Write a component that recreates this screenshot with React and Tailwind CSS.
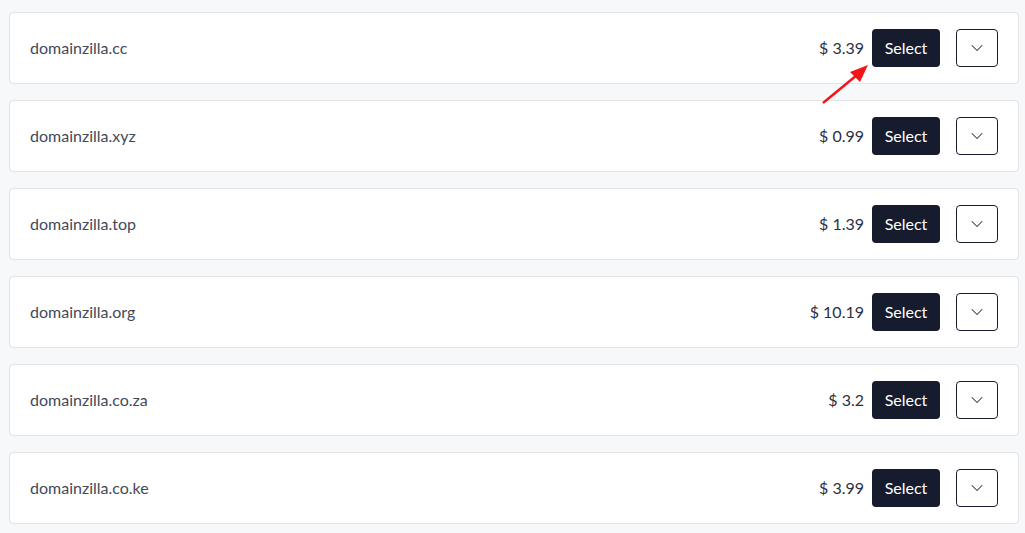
import { ChevronDown } from 'lucide-react'

const domains = [
  { name: 'domainzilla.cc', price: '3.39' },
  { name: 'domainzilla.xyz', price: '0.99' },
  { name: 'domainzilla.top', price: '1.39' },
  { name: 'domainzilla.org', price: '10.19' },
  { name: 'domainzilla.co.za', price: '3.2' },
  { name: 'domainzilla.co.ke', price: '3.99' },
]

export default function App() {
  return (
    <div className="relative min-h-[533px] bg-[#f7f8fa] pl-[9px] pr-[6px] pt-[12px]" style={{ fontFamily: 'Lato, "Open Sans", sans-serif' }}>
      <div className="flex flex-col gap-4">
        {domains.map((d) => (
          <div key={d.name} className="flex h-[72px] items-center rounded border border-[#e3e4e7] bg-white pl-5 pr-5">
            <span className="flex-1 text-[16px] text-[#444a58]">{d.name}</span>
            <span className="mr-2 text-[16px] text-[#2b3140]">$ {d.price}</span>
            <button type="button" className="h-[38px] w-[68px] rounded bg-[#161c2d] text-[16px] text-white">Select</button>
            <button type="button" className="ml-4 flex h-[38px] w-[42px] items-center justify-center rounded border border-[#161c2d] bg-white">
              <ChevronDown className="h-5 w-5 text-[#333a48]" strokeWidth={1.25} />
            </button>
          </div>
        ))}
      </div>
      <svg className="pointer-events-none absolute left-[815px] top-[60px]" width="60" height="50" viewBox="0 0 60 50">
        <line x1="8" y1="43" x2="42" y2="15" stroke="#f2161a" strokeWidth="2.5" />
        <polygon points="53,5 35,12 45,22" fill="#f2161a" />
      </svg>
    </div>
  )
}
